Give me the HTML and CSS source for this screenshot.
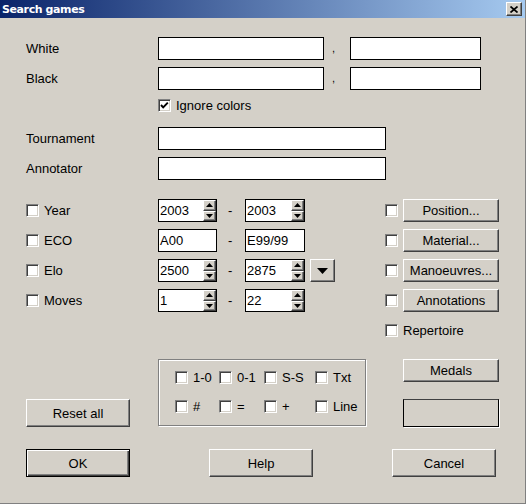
FILE: index.html
```html
<!DOCTYPE html>
<html>
<head>
<meta charset="utf-8">
<link rel="stylesheet" href="styles.css">
</head>
<body>
<div class="window">
  <div class="titlebar">
    <span class="title">Search games</span>
    <span class="close"><svg width="8" height="7" viewBox="0 0 8 7"><path d="M0.5 0.5 L7.5 6.5 M7.5 0.5 L0.5 6.5" stroke="#000" stroke-width="1.7" fill="none"/></svg></span>
  </div>
  <div class="form">
    <div class="row first">
      <span class="label">White</span>
      <span class="field w166"></span>
      <span class="comma">,</span>
      <span class="field w131"></span>
    </div>
    <div class="row">
      <span class="label">Black</span>
      <span class="field w166"></span>
      <span class="comma">,</span>
      <span class="field w131"></span>
    </div>
    <div class="checkrow ignore">
      <span class="cb"><svg width="9" height="9" viewBox="0 0 9 9"><polyline points="1,4 3.2,6.4 7.8,1.6" stroke="#000" stroke-width="1.9" fill="none"/></svg></span>
      <span class="cblabel">Ignore colors</span>
    </div>
    <div class="row tourn">
      <span class="label">Tournament</span>
      <span class="field w228"></span>
    </div>
    <div class="row">
      <span class="label">Annotator</span>
      <span class="field w228"></span>
    </div>

    <div class="row crit firstcrit">
      <span class="cklabel"><span class="cb"></span><span class="cblabel">Year</span></span>
      <span class="spin w59"><span class="val">2003</span><span class="spinbtns"><span class="sb"><svg width="7" height="4"><polygon points="0,4 7,4 3.5,0"/></svg></span><span class="sb"><svg width="7" height="4"><polygon points="0,0 7,0 3.5,4"/></svg></span></span></span>
      <span class="dash">-</span>
      <span class="spin w60"><span class="val">2003</span><span class="spinbtns"><span class="sb"><svg width="7" height="4"><polygon points="0,4 7,4 3.5,0"/></svg></span><span class="sb"><svg width="7" height="4"><polygon points="0,0 7,0 3.5,4"/></svg></span></span></span>
      <span class="right"><span class="cb"></span><button class="btn rbtn">Position...</button></span>
    </div>
    <div class="row crit">
      <span class="cklabel"><span class="cb"></span><span class="cblabel">ECO</span></span>
      <span class="field w59"><span class="val">A00</span></span>
      <span class="dash">-</span>
      <span class="field w60"><span class="val">E99/99</span></span>
      <span class="right"><span class="cb"></span><button class="btn rbtn">Material...</button></span>
    </div>
    <div class="row crit">
      <span class="cklabel"><span class="cb"></span><span class="cblabel">Elo</span></span>
      <span class="spin w59"><span class="val">2500</span><span class="spinbtns"><span class="sb"><svg width="7" height="4"><polygon points="0,4 7,4 3.5,0"/></svg></span><span class="sb"><svg width="7" height="4"><polygon points="0,0 7,0 3.5,4"/></svg></span></span></span>
      <span class="dash">-</span>
      <span class="spin w60"><span class="val">2875</span><span class="spinbtns"><span class="sb"><svg width="7" height="4"><polygon points="0,4 7,4 3.5,0"/></svg></span><span class="sb"><svg width="7" height="4"><polygon points="0,0 7,0 3.5,4"/></svg></span></span></span>
      <button class="btn drop"><svg width="11" height="6"><polygon points="0,0 11,0 5.5,6"/></svg></button>
      <span class="right"><span class="cb"></span><button class="btn rbtn">Manoeuvres...</button></span>
    </div>
    <div class="row crit">
      <span class="cklabel"><span class="cb"></span><span class="cblabel">Moves</span></span>
      <span class="spin w59"><span class="val">1</span><span class="spinbtns"><span class="sb"><svg width="7" height="4"><polygon points="0,4 7,4 3.5,0"/></svg></span><span class="sb"><svg width="7" height="4"><polygon points="0,0 7,0 3.5,4"/></svg></span></span></span>
      <span class="dash">-</span>
      <span class="spin w60"><span class="val">22</span><span class="spinbtns"><span class="sb"><svg width="7" height="4"><polygon points="0,4 7,4 3.5,0"/></svg></span><span class="sb"><svg width="7" height="4"><polygon points="0,0 7,0 3.5,4"/></svg></span></span></span>
      <span class="right"><span class="cb"></span><button class="btn rbtn">Annotations</button></span>
    </div>
    <div class="checkrow rep">
      <span class="right"><span class="cb"></span><span class="cblabel">Repertoire</span></span>
    </div>

    <div class="lower">
      <button class="btn big reset">Reset all</button>
      <div class="group">
        <span class="gi"><span class="cb"></span><span class="cblabel">1-0</span></span>
        <span class="gi"><span class="cb"></span><span class="cblabel">0-1</span></span>
        <span class="gi"><span class="cb"></span><span class="cblabel">S-S</span></span>
        <span class="gi"><span class="cb"></span><span class="cblabel">Txt</span></span>
        <span class="gi"><span class="cb"></span><span class="cblabel">#</span></span>
        <span class="gi"><span class="cb"></span><span class="cblabel">=</span></span>
        <span class="gi"><span class="cb"></span><span class="cblabel">+</span></span>
        <span class="gi"><span class="cb"></span><span class="cblabel">Line</span></span>
      </div>
      <div class="rcol">
        <button class="btn medals">Medals</button>
        <div class="sunken"></div>
      </div>
    </div>

    <div class="bottom">
      <button class="btn big default">OK</button>
      <button class="btn big help">Help</button>
      <button class="btn big cancel">Cancel</button>
    </div>
  </div>
</div>
</body>
</html>
```
FILE: styles.css
```css
* { box-sizing: border-box; }
html, body { margin: 0; padding: 0; }
body {
  background: #d4d0c8;
  font-family: "Liberation Sans", Arial, sans-serif;
  font-size: 13px;
  color: #000;
}
.window {
  width: 526px;
  height: 504px;
  border-right: 1px solid #808080;
  border-bottom: 1px solid #808080;
  background: #d4d0c8;
  overflow: hidden;
}
.titlebar {
  height: 18px;
  display: flex;
  align-items: center;
  justify-content: space-between;
  padding: 0 3px 0 2px;
  background: linear-gradient(to right, #0a246a, #a6caf0);
}
.title {
  color: #fff;
  font-family: "DejaVu Sans", Verdana, sans-serif;
  font-weight: bold;
  font-size: 11px;
  letter-spacing: -0.4px;
}
.close {
  width: 16px;
  height: 14px;
  background: #d4d0c8;
  border: 1px solid;
  border-color: #fff #404040 #404040 #fff;
  box-shadow: inset -1px -1px #808080;
  display: flex;
  align-items: center;
  justify-content: center;
}
.close svg { display: block; }
.form { padding: 0 26px; }
.row {
  display: flex;
  align-items: center;
  height: 23px;
  margin-top: 7px;
}
.row.first { margin-top: 19px; }
.row.tourn { margin-top: 15px; }
.row.firstcrit { margin-top: 19px; }
.label { width: 132px; }
.field {
  height: 23px;
  background: #fff;
  border: 1px solid #000;
  display: flex;
  align-items: center;
}
.w166 { width: 166px; }
.w131 { width: 131px; }
.w228 { width: 228px; }
.w59 { width: 59px; }
.w60 { width: 60px; }
.comma { width: 26px; padding-left: 8px; align-self: flex-start; padding-top: 5px; font-size: 11px; }
.val { padding-left: 1px; flex: 1; line-height: 21px; }
.checkrow {
  display: flex;
  align-items: center;
  height: 13px;
}
.checkrow.ignore { margin-top: 9px; padding-left: 132px; }
.checkrow.rep { margin-top: 12px; }
.cb {
  width: 13px;
  height: 13px;
  flex: none;
  background: #fff;
  border: 1px solid;
  border-color: #808080 #fff #fff #808080;
  box-shadow: inset 1px 1px #404040, inset -1px -1px #d4d0c8;
  display: flex;
  align-items: center;
  justify-content: center;
}
.cb svg { display: block; }
.cblabel { margin-left: 5px; white-space: nowrap; }
.cklabel { width: 132px; display: flex; align-items: center; }
.spin {
  height: 23px;
  background: #fff;
  border: 1px solid #000;
  display: flex;
}
.spinbtns {
  width: 13px;
  display: flex;
  flex-direction: column;
}
.sb {
  flex: 1;
  background: #d4d0c8;
  border: 1px solid;
  border-color: #fff #404040 #404040 #fff;
  box-shadow: inset -1px -1px #808080;
  display: flex;
  align-items: center;
  justify-content: center;
}
.sb svg, .drop svg { display: block; fill: #000; }
.dash { width: 28px; padding-left: 11px; }
.btn {
  font-family: "Liberation Sans", Arial, sans-serif;
  font-size: 13px;
  color: #000;
  background: #d4d0c8;
  border: 1px solid;
  border-color: #fff #404040 #404040 #fff;
  box-shadow: inset -1px -1px #808080;
  padding: 0;
  margin: 0;
  display: flex;
  align-items: center;
  justify-content: center;
}
.drop { width: 25px; height: 23px; margin-left: 5px; }
.right {
  margin-left: auto;
  width: 114px;
  display: flex;
  align-items: center;
}
.rbtn { width: 96px; height: 23px; margin-left: 5px; }
.lower {
  display: flex;
  height: 68px;
  margin-top: 22px;
}
.big { width: 104px; height: 28px; }
.reset { align-self: flex-end; }
.group {
  margin-left: 28px;
  width: 208px;
  height: 67px;
  border: 1px solid #808080;
  box-shadow: inset 1px 1px #fff, 1px 1px 0 #fff;
  padding: 11px 0 0 16px;
  display: grid;
  grid-template-columns: 44px 45px 51px 1fr;
  grid-template-rows: 13px 13px;
  row-gap: 16px;
}
.gi { display: flex; align-items: center; }
.rcol {
  margin-left: auto;
  width: 96px;
  display: flex;
  flex-direction: column;
}
.medals { width: 96px; height: 23px; }
.sunken {
  margin-top: 17px;
  height: 28px;
  border: 1px solid #000;
  border-top-color: #404040;
  box-shadow: 1px 1px 0 #fff;
}
.bottom {
  display: flex;
  margin-top: 22px;
}
.default {
  border: 1px solid #000;
  box-shadow: inset 1px 1px #fff, inset -1px -1px #404040, inset -2px -2px #808080;
}
.help { margin-left: 79px; }
.cancel { margin-left: 79px; }
```
